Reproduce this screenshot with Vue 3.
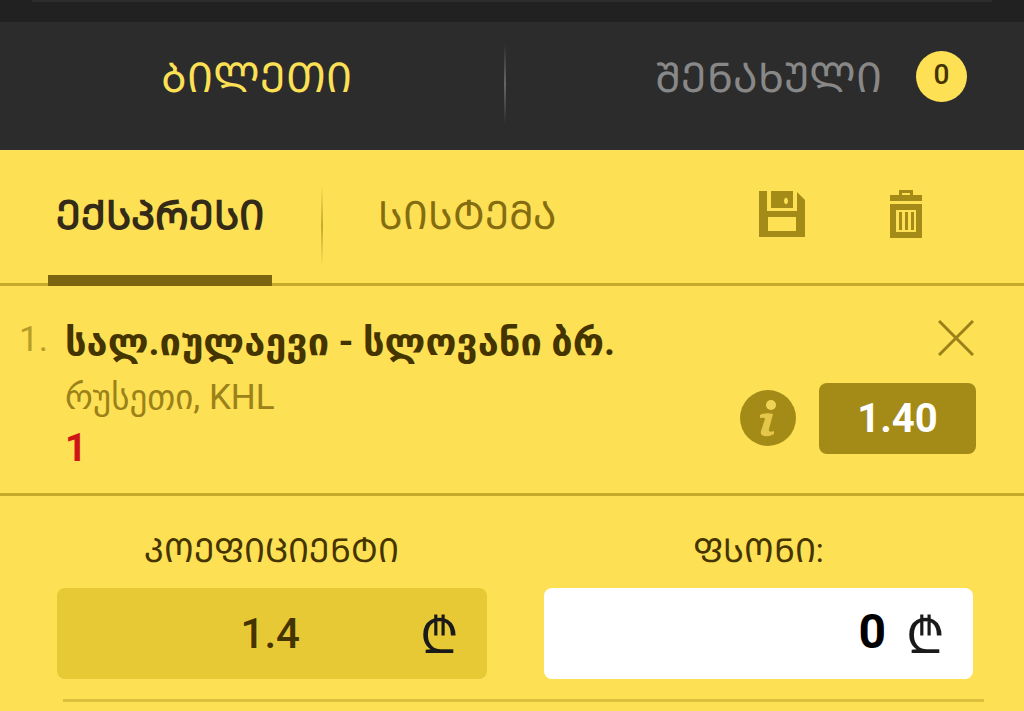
<template>
  <main class="betslip">
    <div class="top-strip"><div class="top-strip-edge"></div></div>

    <nav class="main-tabs" aria-label="ბილეთები">
      <button class="main-tab main-tab-active" type="button">ᲑᲘᲚᲔᲗᲘ</button>
      <span class="main-divider" aria-hidden="true"></span>
      <button class="main-tab main-tab-saved" type="button">
        <span class="main-tab-label">ᲨᲔᲜᲐᲮᲣᲚᲘ</span>
        <span class="badge">{{ savedCount }}</span>
      </button>
    </nav>

    <div class="type-bar">
      <button
        v-for="type in types"
        :key="type.key"
        :class="['type-tab', { 'type-tab-active': type.key === activeType }]"
        type="button"
        @click="activeType = type.key"
      >{{ type.label }}</button>
      <div class="type-actions">
        <button class="icon-button" type="button" aria-label="შენახვა">
          <svg width="46" height="46" viewBox="0 0 46 46" fill="#a48b17">
            <path fill-rule="evenodd" d="M0 0H8V20H38V1L46 9V46H0ZM9 26V40H37V26Z" />
            <path fill-rule="evenodd" d="M12 0H34V17H12ZM27 6.500Q25 7 25 10Q25 13 27 13.500Q29 13 29 10Q29 7 27 6.500Z" />
          </svg>
        </button>
        <button class="icon-button" type="button" aria-label="წაშლა">
          <svg width="32" height="48" viewBox="0 0 32 48" fill="#a48b17">
            <path fill-rule="evenodd" d="M9 0H23V5H32V11H0V5H9ZM12 3V5H20V3Z" />
            <path fill-rule="evenodd" d="M0 14H32V48H0ZM6 20V42H26V20Z" />
            <path d="M9 22H12V40H9ZM15 22H18V40H15ZM21 22H24V40H21Z" />
          </svg>
        </button>
      </div>
    </div>

    <article class="event">
      <span class="event-index">1.</span>
      <div class="event-info">
        <h2 class="event-title">სალ.იულაევი - სლოვანი ბრ.</h2>
        <p class="event-league">რუსეთი, KHL</p>
        <p class="event-pick">1</p>
      </div>
      <div class="event-side">
        <button class="icon-button event-remove" type="button" aria-label="ამოშლა">
          <svg width="36" height="36" viewBox="0 0 36 36" fill="none" stroke="#9b8119" stroke-width="3">
            <path d="M1 1L35 35M35 1L1 35" />
          </svg>
        </button>
        <div class="event-odds">
          <button class="icon-button" type="button" aria-label="ინფორმაცია">
            <svg width="58" height="58" viewBox="0 0 58 58">
              <circle cx="29" cy="28" r="28" fill="#a48b17" />
              <circle cx="32" cy="15" r="5" fill="#f0d454" />
              <path d="M21 25Q27 22 34 24L30 39Q29 43 35 41V44Q30 47 25 46Q21 45 22 41L26 29Q26 27 21 28Z" fill="#e3c64a" />
            </svg>
          </button>
          <button class="odd" type="button">1.40</button>
        </div>
      </div>
    </article>

    <form class="stake" @submit.prevent>
      <div class="field">
        <label for="coef">ᲙᲝᲔᲤᲘᲪᲘᲔᲜᲢᲘ</label>
        <div class="field-box">
          <input id="coef" class="coef-input" type="text" value="1.4" readonly />
          <span class="lari">₾</span>
        </div>
      </div>
      <div class="field">
        <label for="amount">ᲤᲡᲝᲜᲘ:</label>
        <div class="field-box field-box-white">
          <input id="amount" v-model="amount" class="amount-input" type="text" inputmode="decimal" />
          <span class="lari">₾</span>
        </div>
      </div>
    </form>
    <hr class="bottom-line" />
  </main>
</template>

<script setup>
import { ref } from 'vue'

const savedCount = ref(0)
const amount = ref('0')
const activeType = ref('express')

const types = [
  { key: 'express', label: 'ᲔᲥᲡᲞᲠᲔᲡᲘ' },
  { key: 'system', label: 'ᲡᲘᲡᲢᲔᲛᲐ' },
]
</script>

<style>
body {
  background: #fde054;
}
</style>

<style scoped>
.betslip {
  min-height: 100vh;
  overflow: hidden;
  background: #fde054;
  color: #443400;
  font-family: Roboto, "DejaVu Sans", sans-serif;
}

button {
  padding: 0;
  border: 0;
  background: none;
  color: inherit;
  font-family: inherit;
  cursor: pointer;
}

svg {
  display: block;
}

.top-strip {
  height: 22px;
  background: #212121;
}

.top-strip-edge {
  height: 2px;
  margin: 0 32px;
  background: #2c2c2c;
}

.main-tabs {
  display: grid;
  grid-template-columns: 1fr 2px 1fr;
  align-items: center;
  height: 108px;
  padding: 0 14px 20px 0;
  background: #2c2c2c;
}

.main-tab {
  height: 108px;
  color: #888;
  font-size: 41px;
  line-height: 48px;
}

.main-tab-active {
  padding: 4px 0 0 8px;
  color: #fde054;
}

.main-tab-label {
  padding-top: 4px;
}

.main-divider {
  height: 80px;
  margin-top: 16px;
  background: linear-gradient(transparent, #666, transparent);
}

.main-tab-saved {
  display: flex;
  align-items: center;
  justify-content: flex-end;
  gap: 34px;
  padding-right: 43px;
}

.badge {
  flex: none;
  width: 51px;
  height: 51px;
  border-radius: 50%;
  background: #fde054;
  color: #443400;
  font-size: 28px;
  font-weight: 500;
  line-height: 48px;
  text-align: center;
}

.type-bar {
  display: flex;
  height: 133px;
  padding: 0 102px 0 48px;
  border-bottom: 3px solid #c6aa2c;
}

.type-tab {
  height: 136px;
  padding: 0 8px 4px;
  color: #846c10;
  font-size: 39px;
  line-height: 48px;
}

.type-tab + .type-tab {
  margin-left: 49px;
  padding-left: 57px;
  background: linear-gradient(transparent, #c6aa2c, transparent) left 36px / 2px 80px no-repeat;
}

.type-tab-active {
  border-bottom: 11px solid #7b6510;
  padding: 6px 8px 0;
  color: #332a18;
  font-size: 40px;
  font-weight: 700;
}

.type-actions {
  display: flex;
  align-items: center;
  gap: 85px;
  height: 128px;
  margin-left: auto;
}

.event {
  display: flex;
  height: 207px;
  padding: 0 48px 0 19px;
  border-bottom: 3px solid #c6aa2c;
}

.event-index {
  flex: none;
  width: 46px;
  padding-top: 30px;
  color: #b89d27;
  font-size: 35px;
  line-height: 48px;
}

.event-info {
  flex: 1;
  min-width: 0;
  padding-top: 30px;
}

.event-title {
  margin: 0;
  font-size: 38px;
  font-weight: 700;
  line-height: 52px;
  white-space: nowrap;
}

.event-league {
  margin: 0;
  color: #9b8119;
  font-size: 35px;
  line-height: 60px;
}

.event-pick {
  margin: 0;
  color: #cf1616;
  font-size: 38px;
  font-weight: 700;
  line-height: 40px;
}

.event-side {
  display: flex;
  flex-direction: column;
  align-items: flex-end;
  gap: 27px;
  padding-top: 34px;
}

.event-remove {
  margin-right: 2px;
}

.event-odds {
  display: flex;
  align-items: center;
  gap: 22px;
}

.odd {
  width: 157px;
  height: 71px;
  border-radius: 8px;
  background: #a48b17;
  color: #fff;
  font-size: 40px;
  font-weight: 700;
}

.stake {
  display: grid;
  grid-template-columns: repeat(2, minmax(0, 1fr));
  gap: 57px;
  padding: 31px 51px 20px 57px;
}

.field label {
  display: block;
  margin-bottom: 13px;
  font-size: 33px;
  line-height: 48px;
  text-align: center;
}

.field-box {
  display: flex;
  align-items: center;
  height: 91px;
  padding-right: 28px;
  border-radius: 8px;
  background: #e7c935;
}

.field-box-white {
  background: #fff;
}

.field-box input {
  flex: 1;
  min-width: 0;
  padding: 0;
  border: 0;
  outline: none;
  background: none;
  color: #443400;
  font-family: inherit;
  font-size: 42px;
  font-weight: 500;
}

.field-box .coef-input {
  padding-left: 64px;
  text-align: center;
}

.field-box .amount-input {
  padding: 0 20px 4px 0;
  color: #000;
  font-size: 48px;
  font-weight: 700;
  text-align: right;
}

.lari {
  padding-top: 4px;
  color: #1a1a1a;
  font-size: 50px;
  font-weight: 500;
  line-height: 56px;
}

.bottom-line {
  height: 3px;
  margin: 0 40px 0 63px;
  border: 0;
  background: #dcbf3d;
}
</style>
